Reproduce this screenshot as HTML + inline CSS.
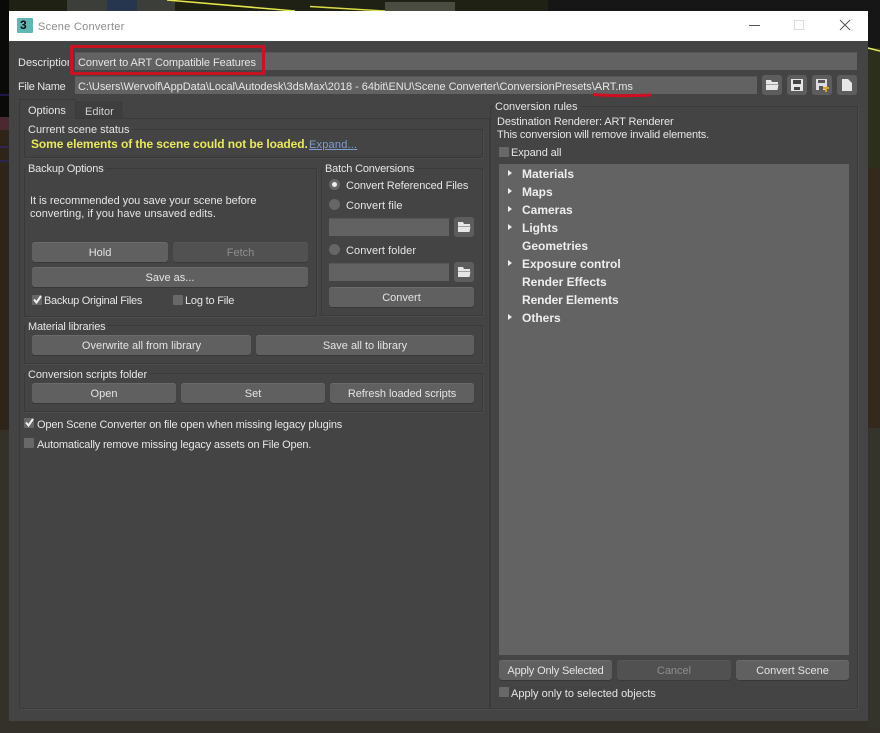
<!DOCTYPE html>
<html><head><meta charset="utf-8"><style>
html,body{margin:0;padding:0;background:#2a2822}
#r{position:relative;width:880px;height:733px;overflow:hidden;font-family:"Liberation Sans",sans-serif;font-size:11px;color:#e6e6e6;background:#35322b}
#r div{position:absolute;box-sizing:border-box;white-space:nowrap}
.t{line-height:14px;padding-top:1px}
.b{background:#606060;border-radius:3px;text-align:center;line-height:22px;height:20px;color:#e4e4e4;box-shadow:inset 0 1px 0 #6a6a6a,0 1px 0 #383838}
.d{background:#515151;color:#8e8e8e;box-shadow:inset 0 1px 0 #575757,0 1px 0 #3a3a3a}
.i{background:#626262;height:18px;box-shadow:inset 0 1px 0 #565656}
.g{border:1px solid #3a3a3a;border-radius:2px;box-shadow:1px 1px 0 #4c4c4c}
.c{width:10px;height:10px;background:#686868;border-radius:1px}
.ra{width:11px;height:11px;border-radius:50%;background:#666}
.l{font-weight:bold;color:#eee;line-height:14px;font-size:12px}
.lb{background:#444;padding:1px 2px 0;line-height:14px}
.ib{width:20px;height:20px;background:#5d5d5d;border-radius:3px}
svg{position:absolute;display:block}
</style></head><body><div id="r">
<svg style="left:0;top:0" width="880" height="733" viewBox="0 0 880 733">
<rect width="880" height="733" fill="#34312a"/>
<rect x="0" y="0" width="548" height="12" fill="#1f2114"/>
<rect x="548" y="0" width="332" height="12" fill="#161616"/>
<rect x="0" y="0" width="9" height="118" fill="#0a0a08"/>
<rect x="0" y="117" width="9" height="13" fill="#4a2a30"/>
<rect x="0" y="130" width="9" height="300" fill="#2e2418"/>
<rect x="868" y="12" width="12" height="36" fill="#161616"/>
<rect x="868" y="48" width="12" height="120" fill="#2c2f1c"/>
<rect x="868" y="168" width="12" height="260" fill="#35291d"/>
<rect x="868" y="428" width="12" height="300" fill="#35342c"/>
<rect x="67" y="0" width="108" height="11" fill="#3c3e3a"/>
<rect x="107" y="0" width="30" height="11" fill="#26364f"/>
<rect x="385" y="2" width="70" height="9" fill="#4a4c42"/>
<path d="M167 0L295 11" stroke="#e6e64a" stroke-width="1.5" fill="none"/>
<path d="M310 6.500L385 11" stroke="#dcdc40" stroke-width="1.5" fill="none"/>
<path d="M868 48L880 51" stroke="#e8e85a" stroke-width="1.5" fill="none"/>
<path d="M0 95H9M0 147H9M0 161H9" stroke="#28288c" stroke-width="1"/>
</svg>

<div style="left:9px;top:11px;width:859px;height:30px;background:#fff"></div>
<div style="left:9px;top:41px;width:859px;height:680px;background:#444"></div>

<!-- title -->
<div style="left:17px;top:18px;width:16px;height:15px;background:#5fb6b4;border-radius:1px"></div>
<div style="left:20px;top:18px;width:10px;height:14px;font-weight:bold;font-size:12px;line-height:14px;color:#111">3</div>
<div class="t" style="left:38px;top:19px;color:#8a8a8a;font-size:11px;letter-spacing:.27px">Scene Converter</div>
<div style="left:749px;top:25px;width:11px;height:1px;background:#555"></div>
<div style="left:794px;top:20px;width:10px;height:10px;border:1px solid #ddd"></div>
<svg style="left:839px;top:19px" width="12" height="12"><path d="M1 1L11 11M11 1L1 11" stroke="#555" stroke-width="1"/></svg>

<!-- desc / file -->
<div class="t" style="left:18px;top:55px;width:51px;overflow:hidden">Description</div>
<div class="i" style="left:75px;top:52px;width:782px"></div>
<div class="t" style="left:78px;top:55px;letter-spacing:-.06px">Convert to ART Compatible Features</div>
<div style="left:70px;top:45px;width:195px;height:30px;border:3px solid #c7141f"></div>
<div class="t" style="left:18px;top:79px;letter-spacing:-.3px">File Name</div>
<div class="i" style="left:75px;top:76px;width:682px"></div>
<div class="t" style="left:78px;top:79px;width:676px;overflow:hidden;letter-spacing:-.04px">C:\Users\Wervolf\AppData\Local\Autodesk\3dsMax\2018 - 64bit\ENU\Scene Converter\ConversionPresets\ART.ms</div>
<svg style="left:590px;top:92px" width="64" height="8"><path d="M3 2.500C20 4 40 4 61 3" stroke="#d20f22" stroke-width="3" fill="none"/></svg>

<div class="ib" style="left:762px;top:75px"></div>
<svg style="left:762px;top:75px" width="20" height="20"><path d="M4 5h5l1 2h6v2H4zM4 9.500h12.500l-1 5.500H4z" fill="#e6e6e6"/></svg>
<div class="ib" style="left:787px;top:75px"></div>
<svg style="left:787px;top:75px" width="20" height="20"><path d="M4 4h12v12H4z" fill="#e6e6e6"/><path d="M6 5h8v4H6zM7 12h6v3H7z" fill="#444"/></svg>
<div class="ib" style="left:812px;top:75px"></div>
<svg style="left:812px;top:75px" width="20" height="20"><path d="M4 4h11v11H4z" fill="#ddd"/><path d="M6 5h7v3H6zM7 11h4v4H7z" fill="#555"/><path d="M11 12h6v2h-2v3h-2v-3h-2z" fill="#d9a520"/></svg>
<div class="ib" style="left:837px;top:75px"></div>
<svg style="left:837px;top:75px" width="20" height="20"><path d="M5 4h6l4 4v8H5z" fill="#e6e6e6"/></svg>

<!-- tabs -->
<div style="left:19px;top:118px;width:471px;height:591px;border:1px solid #3a3a3a;box-shadow:1px 1px 0 #4c4c4c"></div>
<div style="left:19px;top:99px;width:57px;height:20px;background:#444;border:1px solid #3a3a3a;border-bottom:0"></div>
<div style="left:76px;top:101px;width:47px;height:17px;background:#3e3e3e"></div>
<div class="t" style="left:28px;top:103px">Options</div>
<div class="t" style="left:85px;top:104px;color:#d0d0d0">Editor</div>

<!-- status -->
<div class="g" style="left:24px;top:129px;width:459px;height:29px"></div>
<div class="lb" style="left:26px;top:122px">Current scene status</div>
<div class="t" style="left:31px;top:137px;padding-top:0;font-weight:bold;font-size:12px;letter-spacing:-.1px;color:#e9e95c">Some elements of the scene could not be loaded.</div>
<div class="t" style="left:309px;top:137px;color:#7d9fd0;text-decoration:underline;letter-spacing:.2px">Expand...</div>

<!-- backup -->
<div class="g" style="left:24px;top:168px;width:293px;height:149px"></div>
<div class="lb" style="left:26px;top:161px;letter-spacing:-.15px">Backup Options</div>
<div class="t" style="left:30px;top:194px;line-height:13px"><span style="letter-spacing:-.05px">It is recommended you save your scene before</span><br><span style="letter-spacing:.05px">converting, if you have unsaved edits.</span></div>
<div class="b" style="left:32px;top:242px;width:136px">Hold</div>
<div class="b d" style="left:173px;top:242px;width:135px">Fetch</div>
<div class="b" style="left:32px;top:267px;width:276px">Save as...</div>
<div class="c" style="left:32px;top:295px"></div>
<svg style="left:32px;top:294px" width="11" height="11"><path d="M2 5.500L4.500 8.500L9 2" stroke="#f0f0f0" stroke-width="2" fill="none"/></svg>
<div class="t" style="left:44px;top:293px;letter-spacing:-.28px">Backup Original Files</div>
<div class="c" style="left:173px;top:295px"></div>
<div class="t" style="left:185px;top:293px;letter-spacing:-.2px">Log to File</div>

<!-- batch -->
<div class="g" style="left:321px;top:168px;width:162px;height:148px"></div>
<div class="lb" style="left:323px;top:161px;letter-spacing:-.18px">Batch Conversions</div>
<div class="ra" style="left:329px;top:179px"></div>
<div style="left:332px;top:182px;width:5px;height:5px;border-radius:50%;background:#eee"></div>
<div class="t" style="left:346px;top:178px;letter-spacing:-.1px">Convert Referenced Files</div>
<div class="ra" style="left:329px;top:199px"></div>
<div class="t" style="left:346px;top:198px;letter-spacing:.08px">Convert file</div>
<div class="i" style="left:329px;top:218px;width:120px"></div>
<div class="ib" style="left:454px;top:217px"></div>
<svg style="left:454px;top:217px" width="20" height="20"><path d="M4 5h5l1 2h6v2H4zM4 9.500h12.500l-1 5.500H4z" fill="#e6e6e6"/></svg>
<div class="ra" style="left:329px;top:244px"></div>
<div class="t" style="left:346px;top:243px;letter-spacing:.07px">Convert folder</div>
<div class="i" style="left:329px;top:263px;width:120px"></div>
<div class="ib" style="left:454px;top:262px"></div>
<svg style="left:454px;top:262px" width="20" height="20"><path d="M4 5h5l1 2h6v2H4zM4 9.500h12.500l-1 5.500H4z" fill="#e6e6e6"/></svg>
<div class="b" style="left:329px;top:287px;width:145px">Convert</div>

<!-- material -->
<div class="g" style="left:24px;top:325px;width:459px;height:39px"></div>
<div class="lb" style="left:26px;top:319px;letter-spacing:-.18px">Material libraries</div>
<div class="b" style="left:32px;top:335px;width:219px">Overwrite all from library</div>
<div class="b" style="left:256px;top:335px;width:218px">Save all to library</div>

<!-- scripts -->
<div class="g" style="left:24px;top:373px;width:459px;height:39px"></div>
<div class="lb" style="left:26px;top:367px;letter-spacing:-.08px">Conversion scripts folder</div>
<div class="b" style="left:32px;top:383px;width:144px">Open</div>
<div class="b" style="left:181px;top:383px;width:144px">Set</div>
<div class="b" style="left:330px;top:383px;width:144px;letter-spacing:-.05px">Refresh loaded scripts</div>

<div class="c" style="left:24px;top:418px"></div>
<svg style="left:24px;top:417px" width="11" height="11"><path d="M2 5.500L4.500 8.500L9 2" stroke="#f0f0f0" stroke-width="2" fill="none"/></svg>
<div class="t" style="left:37px;top:417px;letter-spacing:-.16px">Open Scene Converter on file open when missing legacy plugins</div>
<div class="c" style="left:24px;top:438px"></div>
<div class="t" style="left:37px;top:437px;letter-spacing:-.18px">Automatically remove missing legacy assets on File Open.</div>

<!-- right -->
<div class="g" style="left:490px;top:106px;width:368px;height:603px"></div>
<div class="lb" style="left:493px;top:99px">Conversion rules</div>
<div class="t" style="left:497px;top:114px;letter-spacing:-.1px">Destination Renderer: ART Renderer</div>
<div class="t" style="left:497px;top:127px;letter-spacing:-.18px">This conversion will remove invalid elements.</div>
<div class="c" style="left:499px;top:147px"></div>
<div class="t" style="left:511px;top:145px;letter-spacing:-.1px">Expand all</div>
<div style="left:499px;top:164px;width:350px;height:491px;background:#636363"></div>
<div class="l" style="left:522px;top:167px">Materials</div>
<div class="l" style="left:522px;top:185px">Maps</div>
<div class="l" style="left:522px;top:203px">Cameras</div>
<div class="l" style="left:522px;top:221px">Lights</div>
<div class="l" style="left:522px;top:239px">Geometries</div>
<div class="l" style="left:522px;top:257px">Exposure control</div>
<div class="l" style="left:522px;top:275px">Render Effects</div>
<div class="l" style="left:522px;top:293px;letter-spacing:-.1px">Render Elements</div>
<div class="l" style="left:522px;top:311px">Others</div>
<svg style="left:505px;top:164px" width="10" height="160" fill="#eee"><path d="M3 6l4 3-4 3zM3 24l4 3-4 3zM3 42l4 3-4 3zM3 60l4 3-4 3zM3 96l4 3-4 3zM3 150l4 3-4 3z"/></svg>
<div class="b" style="left:499px;top:660px;width:113px;letter-spacing:-.15px">Apply Only Selected</div>
<div class="b d" style="left:617px;top:660px;width:114px">Cancel</div>
<div class="b" style="left:736px;top:660px;width:113px">Convert Scene</div>
<div class="c" style="left:499px;top:687px"></div>
<div class="t" style="left:511px;top:686px">Apply only to selected objects</div>
</div></body></html>
